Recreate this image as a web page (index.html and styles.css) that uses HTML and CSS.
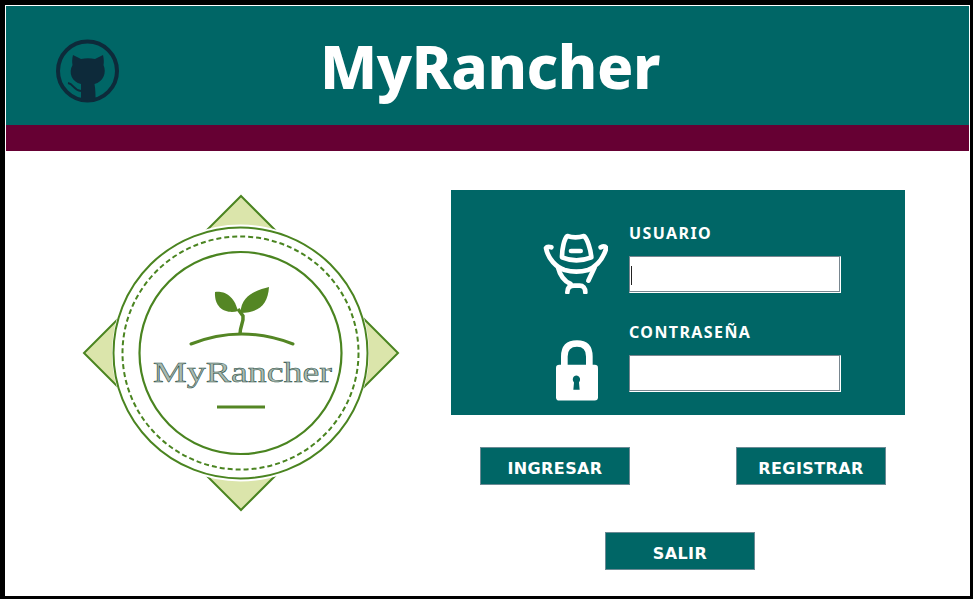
FILE: index.html
```html
<!DOCTYPE html>
<html lang="es">
<head>
  <meta charset="UTF-8" />
  <title>MyRancher</title>
  <link rel="stylesheet" href="styles.css">
</head>
<body>
  <div class="frame">
    <header class="top-bar">
      <svg class="github-icon" viewBox="0 0 64 64">
        <circle cx="31.5" cy="32" r="29.5" fill="none" stroke="#0d2a3a" stroke-width="4"/>
        <path fill="#0d2a3a" d="M17 16 L25 20 Q32 18.5 39 20 L47 16 C48 20 48 24 47.5 26 C51 34 47 43 38.5 45 C39.5 50 39.5 56 39.5 61 Q32 63 25 61 L25 45 C16 43 12 34 16.5 26 C16 23 16 20 17 16Z"/>
        <path fill="none" stroke="#0d2a3a" stroke-width="2" d="M12 44 C18 45 17 51 25 52"/>
      </svg>
      <h1 class="title">MyRancher</h1>
    </header>
    <div class="stripe"></div>

    <main class="content">
      <div class="logo-col">
        <svg class="logo" viewBox="81 194 320 320">
          <polygon points="241,196 398,353 241,510 84,353" fill="#dbe5ab" stroke="#4a8420" stroke-width="2"/>
          <circle cx="240.5" cy="353" r="128.5" fill="#fff"/>
          <ellipse cx="240.5" cy="353" rx="127" ry="125.5" fill="none" stroke="#4a8420" stroke-width="2"/>
          <ellipse cx="240.5" cy="353" rx="118" ry="116.5" fill="none" stroke="#4a8420" stroke-width="2" stroke-dasharray="5 3"/>
          <circle cx="240.5" cy="353" r="101" fill="none" stroke="#4a8420" stroke-width="2.2"/>
          <path fill="#548624" d="M215 292 C222 291 233 293 238 311 C228 314 214 310 215 292Z"/>
          <path fill="#548624" d="M269 287 C258 290 241 294 240.5 313 C258 313 268 305 269 287Z"/>
          <path fill="none" stroke="#548624" stroke-width="3.5" d="M240 334 C240 326 244 322 243 316 L238 309"/>
          <path fill="none" stroke="#548624" stroke-width="3" stroke-linecap="round" d="M191 344 Q241 324 293 344"/>
          <text class="logo-text" x="153" y="382" textLength="179" lengthAdjust="spacingAndGlyphs">MyRancher</text>
          <line x1="217" y1="407" x2="265" y2="407" stroke="#548624" stroke-width="3"/>
        </svg>
      </div>

      <div class="form-col">
        <section class="panel">
          <div class="row">
            <div class="icon-box">
              <svg class="hat-icon" viewBox="15 15 195 195">
                <g fill="none" stroke="#fff" stroke-width="14" stroke-linecap="round" stroke-linejoin="round">
                  <path d="M72 100 C72 75 78 45 88 36 Q112 44 138 36 C148 45 158 75 160 100 Q115 118 72 100Z"/>
                  <path d="M99 81 H128"/>
                  <path d="M40 70 Q28 66 24 72 C30 105 55 130 80 138 Q115 148 150 138 C175 128 195 105 205 72 Q200 64 188 70"/>
                  <path d="M60 130 C65 150 75 170 98 180"/>
                  <path d="M170 130 L151 170"/>
                  <path d="M88 205 C88 192 95 185 108 185 H125 C135 185 142 192 142 205"/>
                </g>
              </svg>
            </div>
            <div class="field">
              <label class="field-label" for="usuario">USUARIO</label>
              <div class="input-wrap">
                <input class="text-input" id="usuario" type="text" />
                <span class="caret"></span>
              </div>
            </div>
          </div>
          <div class="row">
            <div class="icon-box">
              <svg class="lock-icon" viewBox="80 376 126 182">
                <path fill="none" stroke="#fff" stroke-width="20" d="M105 460 V425 C105 397 120 386 143 386 C166 386 180 397 180 425 V460"/>
                <rect x="80" y="450" width="126" height="107" rx="10" fill="#fff"/>
                <path fill="#006666" d="M141 482 C151 482 156 494 149 503 L151 525 H132 L134 503 C127 494 131 482 141 482Z"/>
              </svg>
            </div>
            <div class="field">
              <label class="field-label" for="clave">CONTRASEÑA</label>
              <div class="input-wrap">
                <input class="text-input" id="clave" type="password" />
              </div>
            </div>
          </div>
        </section>

        <div class="btn-row">
          <button class="btn">INGRESAR</button>
          <button class="btn">REGISTRAR</button>
        </div>
        <button class="btn btn-salir">SALIR</button>
      </div>
    </main>
  </div>
</body>
</html>
```

FILE: styles.css
```css
* { box-sizing: border-box; }

html, body {
  margin: 0;
  height: 100%;
  background: #000;
}

.frame {
  height: 599px;
  background: #fff;
  border-style: solid;
  border-color: #000;
  border-width: 5px 3px 3px 5px;
  padding: 1px 1px 0 1px;
}

.top-bar {
  display: flex;
  align-items: center;
  height: 119px;
  padding-left: 50px;
  background: #006666;
}

.github-icon {
  width: 64px;
  height: 64px;
  margin-top: 11px;
}

.title {
  margin: 0 0 0 200px;
  font-family: "Noto Sans", sans-serif;
  font-size: 60px;
  font-weight: 800;
  letter-spacing: -0.4px;
  color: #fff;
}

.stripe {
  height: 26px;
  background: #660033;
}

.content {
  display: flex;
}

.logo-col {
  width: 445px;
  padding: 43px 0 0 75px;
}

.logo {
  display: block;
  width: 320px;
  height: 320px;
}

.logo-text {
  font-family: "Liberation Serif", serif;
  font-size: 29px;
  fill: #a9bab1;
  stroke: #24483c;
  stroke-width: 0.5;
}

.form-col {
  display: flex;
  flex-direction: column;
  align-items: flex-start;
  padding-top: 39px;
}

.panel {
  display: flex;
  flex-direction: column;
  gap: 29px;
  width: 454px;
  height: 225px;
  padding: 33px 0 0 92px;
  background: #006666;
}

.row {
  display: flex;
  height: 70px;
}

.icon-box {
  width: 86px;
}

.hat-icon {
  display: block;
  width: 65px;
  height: 65px;
  margin-top: 6px;
}

.lock-icon {
  display: block;
  width: 42px;
  height: 61px;
  margin: 18px 0 0 13px;
}

.field {
  display: flex;
  flex-direction: column;
}

.field-label {
  height: 20px;
  margin-bottom: 13px;
  font-family: "Noto Sans", sans-serif;
  font-size: 16px;
  line-height: 20px;
  font-weight: 700;
  letter-spacing: 1.4px;
  color: #fff;
}

.input-wrap {
  position: relative;
}

.text-input {
  display: block;
  width: 212px;
  height: 37px;
  padding: 0;
  background: #fff;
  border: 1px solid;
  border-color: #78868f #fff #fff #78868f;
  box-shadow: inset -1px -1px 0 #78868f;
  outline: none;
}

.caret {
  position: absolute;
  left: 2px;
  top: 10px;
  width: 1px;
  height: 19px;
  background: #222;
}

.btn-row {
  display: flex;
  gap: 106px;
  margin: 32px 0 0 29px;
}

.btn {
  width: 150px;
  height: 38px;
  padding: 4px 0 0;
  font-family: "DejaVu Sans", sans-serif;
  font-size: 16px;
  font-weight: 700;
  letter-spacing: 0.4px;
  color: #fff;
  background: #006666;
  border: 1px solid #6b8a94;
  border-radius: 0;
}

.btn-salir {
  margin: 47px 0 0 154px;
}
```
